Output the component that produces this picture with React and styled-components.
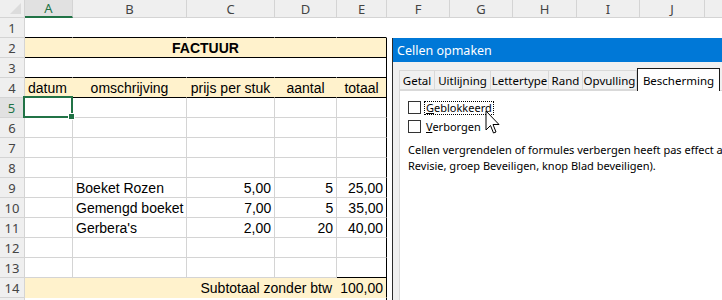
import React from 'react'
import styled, { createGlobalStyle } from 'styled-components'

const GlobalStyle = createGlobalStyle`
  html, body {
    margin: 0;
    padding: 0;
    background: #ffffff;
    overflow: hidden;
  }
`

const GREEN = '#217346'
const GRID = '#d4d4d4'
const FILL = '#fff2cc'
const cols = ['A', 'B', 'C', 'D', 'E', 'F', 'G', 'H', 'I', 'J', 'K']
const widths = [48, 114, 88, 62, 50, 63, 63, 64, 63, 65, 70]

const Page = styled.div`
  position: relative;
  width: 722px;
  height: 300px;
  overflow: hidden;
  background: #fff;
`

const Sheet = styled.div`
  display: flex;
  flex-direction: column;
  font-family: "Liberation Sans", Arial, sans-serif;
  font-size: 14px;
  color: #000;
`

const HeaderRow = styled.div`
  display: flex;
  height: 18px;
`

const Corner = styled.div`
  position: relative;
  flex: 0 0 25px;
  box-sizing: border-box;
  background: #efefef;
  border-right: 1px solid ${GRID};
  border-bottom: 1px solid ${GRID};
  &::after {
    content: '';
    position: absolute;
    right: 3px;
    bottom: 3px;
    border-style: solid;
    border-width: 0 0 11px 11px;
    border-color: transparent transparent #dcdcdc transparent;
  }
`

const ColHead = styled.div`
  flex: 0 0 ${p => p.$w}px;
  box-sizing: border-box;
  display: flex;
  align-items: center;
  justify-content: center;
  background: ${p => (p.$active ? '#e1e1e1' : '#efefef')};
  border-right: 1px solid ${GRID};
  border-bottom: ${p => (p.$active ? `2px solid ${GREEN}` : `1px solid ${GRID}`)};
  font-family: "Noto Sans", "Open Sans", sans-serif;
  font-size: 13px;
  color: ${p => (p.$active ? GREEN : '#444')};
`

const Row = styled.div`
  display: flex;
  height: 20px;
`

const RowHead = styled.div`
  flex: 0 0 25px;
  box-sizing: border-box;
  display: flex;
  align-items: center;
  justify-content: center;
  background: ${p => (p.$active ? '#e1e1e1' : '#efefef')};
  border-bottom: 1px solid ${GRID};
  border-right: ${p => (p.$active ? `2px solid ${GREEN}` : `1px solid ${GRID}`)};
  font-family: "Noto Sans", "Open Sans", sans-serif;
  font-size: 13px;
  color: ${p => (p.$active ? GREEN : '#444')};
`

const Cell = styled.div`
  position: relative;
  flex: 0 0 ${p => p.$w}px;
  box-sizing: border-box;
  display: flex;
  align-items: center;
  justify-content: ${p => p.$align || 'flex-start'};
  padding: 0 ${p => p.$pad || 3}px 0 3px;
  background: ${p => p.$fill || '#fff'};
  border-bottom: 1px solid ${p => p.$bottom || 'transparent'};
  border-right: 1px solid ${p => p.$right || 'transparent'};
  font-weight: ${p => (p.$bold ? 700 : 400)};
  white-space: nowrap;
`

const Selection = styled.div`
  position: absolute;
  left: -2px;
  top: -2px;
  right: -1px;
  bottom: -1px;
  border: 2px solid ${GREEN};
  z-index: 2;
  &::after {
    content: '';
    position: absolute;
    right: -4px;
    bottom: -4px;
    width: 5px;
    height: 5px;
    background: ${GREEN};
    border: 1px solid #fff;
  }
`

/* dialog */

const Dialog = styled.div`
  position: absolute;
  left: 392px;
  top: 38px;
  width: 360px;
  height: 280px;
  box-sizing: border-box;
  border-left: 1px solid #2b2b2b;
  background: #f0f0f0;
  font-family: "Noto Sans", "Open Sans", sans-serif;
  font-size: 11px;
  color: #000;
  z-index: 5;
`

const TitleBar = styled.div`
  height: 24px;
  background: #0078d7;
  color: #fff;
  display: flex;
  align-items: center;
  padding-left: 4px;
  font-size: 12.5px;
`

const Body = styled.div`
  padding: 8px 0 0 6px;
`

const Tabs = styled.div`
  display: flex;
  align-items: flex-end;
  height: 20px;
  position: relative;
  z-index: 1;
`

const Tab = styled.div`
  box-sizing: border-box;
  flex: 0 0 ${p => p.$w}px;
  height: ${p => (p.$selected ? '23px' : '20px')};
  margin: ${p => (p.$selected ? '0 0 -1px 0' : '0')};
  padding-top: ${p => (p.$selected ? '0' : '1px')};
  display: flex;
  align-items: center;
  justify-content: center;
  background: ${p => (p.$selected ? '#fff' : '#f0f0f0')};
  border: 1px solid ${p => (p.$selected ? '#1a1a1a' : '#d9d9d9')};
  border-bottom: ${p => (p.$selected ? 'none' : '1px solid #d9d9d9')};
  border-left: ${p => (p.$first || p.$selected ? undefined : 'none')};
  font-size: 11.5px;
  white-space: nowrap;
`

const Panel = styled.div`
  background: #fff;
  border: 1px solid #d9d9d9;
  height: 220px;
  padding: 10px 0 0 8px;
  display: flex;
  flex-direction: column;
  gap: 6px;
`

const CheckRow = styled.div`
  display: flex;
  align-items: center;
  gap: 3px;
  height: 13px;
`

const Box = styled.span`
  width: 13px;
  height: 13px;
  box-sizing: border-box;
  border: 1px solid #333;
  background: #fff;
`

const Label = styled.span`
  padding: 0 1px;
  line-height: 12px;
  border: 1px dotted ${p => (p.$focus ? '#000' : 'transparent')};
`

const Note = styled.p`
  margin: 3px 0 0;
  line-height: 16px;
  white-space: nowrap;
`

const Cursor = styled.svg`
  position: absolute;
  left: 485px;
  top: 110px;
  z-index: 10;
`

const dataRows = {
  9: ['', 'Boeket Rozen', '5,00', '5', '25,00'],
  10: ['', 'Gemengd boeket', '7,00', '5', '35,00'],
  11: ['', "Gerbera's", '2,00', '20', '40,00'],
}

const tabs = [
  ['Getal', 36],
  ['Uitlijning', 56],
  ['Lettertype', 58],
  ['Rand', 34],
  ['Opvulling', 54],
  ['Bescherming', 83],
]

const restCols = () =>
  widths.slice(5).map((w, i) => <Cell key={'r' + i} $w={w} />)

const App = () => {
  const rows = []

  rows.push(
    <Row key={1}>
      <RowHead>1</RowHead>
      {widths.slice(0, 5).map((w, i) => (
        <Cell key={i} $w={w} $bottom="#000" />
      ))}
      {restCols()}
    </Row>
  )
  rows.push(
    <Row key={2}>
      <RowHead>2</RowHead>
      <Cell $w={362} $fill={FILL} $bottom="#000" $right="#000" $align="center" $bold>
        FACTUUR
      </Cell>
      {restCols()}
    </Row>
  )
  rows.push(
    <Row key={3}>
      <RowHead>3</RowHead>
      {widths.slice(0, 5).map((w, i) => (
        <Cell key={i} $w={w} $bottom="#000" $right={i === 4 ? '#000' : undefined} />
      ))}
      {restCols()}
    </Row>
  )
  const heads = ['datum', 'omschrijving', 'prijs per stuk', 'aantal', 'totaal']
  rows.push(
    <Row key={4}>
      <RowHead>4</RowHead>
      {widths.slice(0, 5).map((w, i) => (
        <Cell
          key={i}
          $w={w}
          $fill={FILL}
          $bottom="#000"
          $right={i === 4 ? '#000' : undefined}
          $align={i === 0 ? 'flex-start' : 'center'}
        >
          {heads[i]}
        </Cell>
      ))}
      {restCols()}
    </Row>
  )
  for (let r = 5; r <= 13; r++) {
    const vals = dataRows[r] || ['', '', '', '', '']
    rows.push(
      <Row key={r}>
        <RowHead $active={r === 5}>{r}</RowHead>
        {widths.slice(0, 5).map((w, i) => (
          <Cell
            key={i}
            $w={w}
            $bottom={r === 13 && i === 4 ? '#000' : GRID}
            $right={i === 4 ? '#000' : GRID}
            $align={i >= 2 ? 'flex-end' : 'flex-start'}
          >
            {r === 5 && i === 0 && <Selection />}
            {vals[i]}
          </Cell>
        ))}
        {restCols()}
      </Row>
    )
  }
  rows.push(
    <Row key={14}>
      <RowHead>14</RowHead>
      <Cell $w={312} $fill={FILL} $align="flex-end" $pad={4}>
        Subtotaal zonder btw
      </Cell>
      <Cell $w={50} $fill={FILL} $right="#000" $align="flex-end">
        100,00
      </Cell>
      {restCols()}
    </Row>
  )
  rows.push(
    <Row key={15}>
      <RowHead />
      {widths.slice(0, 5).map((w, i) => (
        <Cell key={i} $w={w} $right={i === 4 ? '#000' : undefined} />
      ))}
      {restCols()}
    </Row>
  )

  return (
    <Page>
      <GlobalStyle />
      <Sheet>
        <HeaderRow>
          <Corner />
          {cols.map((c, i) => (
            <ColHead key={c} $w={widths[i]} $active={i === 0}>
              {c}
            </ColHead>
          ))}
        </HeaderRow>
        {rows}
      </Sheet>

      <Dialog>
        <TitleBar>Cellen opmaken</TitleBar>
        <Body>
          <Tabs>
            {tabs.map(([t, w], i) => (
              <Tab key={t} $w={w} $first={i === 0} $selected={i === tabs.length - 1}>
                {t}
              </Tab>
            ))}
          </Tabs>
          <Panel>
            <CheckRow>
              <Box />
              <Label $focus>
                <u>G</u>eblokkeerd
              </Label>
            </CheckRow>
            <CheckRow>
              <Box />
              <Label>
                <u>V</u>erborgen
              </Label>
            </CheckRow>
            <Note>
              Cellen vergrendelen of formules verbergen heeft pas effect als het werkblad is beveiligd (tabblad
              <br />
              Revisie, groep Beveiligen, knop Blad beveiligen).
            </Note>
          </Panel>
        </Body>
      </Dialog>

      <Cursor width="16" height="26" viewBox="0 0 16 26">
        <path
          d="M1 1 L1 20 L5.5 15.5 L8.5 23 L11 22 L8 14.5 L14 14.5 Z"
          fill="#fff"
          stroke="#000"
          strokeWidth="1"
          strokeLinejoin="miter"
        />
      </Cursor>
    </Page>
  )
}

export default App
